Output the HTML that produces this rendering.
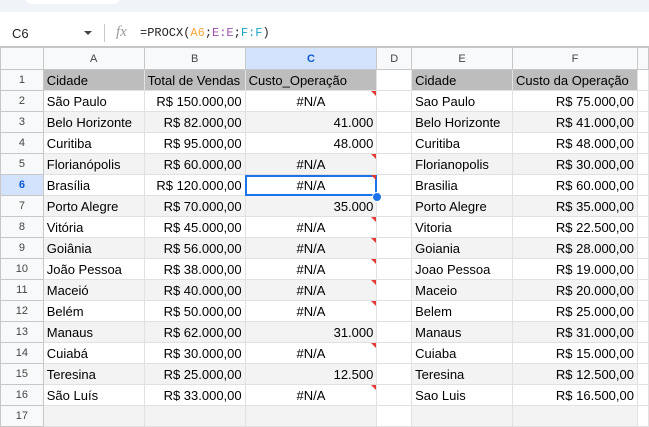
<!DOCTYPE html>
<html><head><meta charset="utf-8"><style>
body{margin:0;width:649px;height:411px;overflow:hidden;background:#fff;font-family:"Liberation Sans",Arial,sans-serif;position:relative}
.top{position:absolute;left:0;top:0;width:649px;height:12px;background:#f0f4f9}
.pill{position:absolute;left:25px;top:-10px;width:95px;height:14px;background:#fff;border-radius:10px}
.fbar{position:absolute;left:0;top:20px;width:649px;height:26px;border-bottom:1px solid #c7c7c7;font-size:13px}
.fbar .nm{position:absolute;left:12px;top:6px;color:#1f1f1f}
.fbar .dd{position:absolute;left:84px;top:11px;width:0;height:0;border-left:4px solid transparent;border-right:4px solid transparent;border-top:4px solid #444}
.fbar .sep{position:absolute;left:104px;top:4px;width:1px;height:18px;background:#c7c7c7}
.fbar .fx{position:absolute;left:116px;top:4px;color:#999;font-style:italic;font-family:"Liberation Serif",serif;font-size:15px}
.fbar .f{position:absolute;left:140px;top:6px;font-family:"Liberation Mono",monospace;font-size:12px;color:#1f1f1f}
table{position:absolute;left:0;top:47px;border-collapse:collapse;table-layout:fixed}
td{height:20px;padding:0 3px;border:1px solid #e1e1e1;font-size:13px;color:#000;white-space:nowrap;overflow:hidden;position:relative}
tr.h td{height:21px;background:#f8f9fa;color:#444;font-size:11px;text-align:center;border-color:#c7c7c7}
td.rh{background:#f8f9fa;color:#444;font-size:11px;text-align:center;border-color:#c7c7c7}
tr.h td.sel{background:#d3e3fd;color:#0b57d0;font-weight:bold}
td.rh.sel{background:#d3e3fd;color:#0b57d0;font-weight:bold}
tr.hd td.d{background:#bdbdbd}
tr.g td.d{background:#f3f3f3}
.r{text-align:right}.c{text-align:center}
.tri:after{content:"";position:absolute;right:0;top:0;border-top:5px solid #e53935;border-left:5px solid transparent}
.cur{outline:2px solid #1a73e8;outline-offset:-2px}
.dot{position:absolute;left:372px;top:192px;width:8px;height:8px;border-radius:50%;background:#1a73e8;border:1px solid #fff}
</style></head><body>
<div class="top"><div class="pill"></div></div>
<div class="fbar"><span class="nm">C6</span><span class="dd"></span><span class="sep"></span><span class="fx">fx</span><span class="f">=PROCX(<span style="color:#f4a53c">A6</span>;<span style="color:#9c4fb0">E:E</span>;<span style="color:#1aa3c8">F:F</span>)</span></div>
<table>
<colgroup><col style="width:43px"><col style="width:101px"><col style="width:101px"><col style="width:132px"><col style="width:35px"><col style="width:101px"><col style="width:125px"><col style="width:11px"></colgroup>
<tr class="h"><td class="rh"></td><td>A</td><td>B</td><td class="sel">C</td><td>D</td><td>E</td><td>F</td><td></td></tr>
<tr class="hd"><td class="rh">1</td><td class="d">Cidade</td><td class="d">Total de Vendas</td><td class="d">Custo_Operação</td><td></td><td class="d">Cidade</td><td class="d">Custo da Operação</td><td></td></tr>
<tr><td class="rh">2</td><td class="d">São Paulo</td><td class="d r">R$ 150.000,00</td><td class="d c tri">#N/A</td><td></td><td class="d">Sao Paulo</td><td class="d r">R$ 75.000,00</td><td></td></tr>
<tr class="g"><td class="rh">3</td><td class="d">Belo Horizonte</td><td class="d r">R$ 82.000,00</td><td class="d r">41.000</td><td></td><td class="d">Belo Horizonte</td><td class="d r">R$ 41.000,00</td><td></td></tr>
<tr><td class="rh">4</td><td class="d">Curitiba</td><td class="d r">R$ 95.000,00</td><td class="d r">48.000</td><td></td><td class="d">Curitiba</td><td class="d r">R$ 48.000,00</td><td></td></tr>
<tr class="g"><td class="rh">5</td><td class="d">Florianópolis</td><td class="d r">R$ 60.000,00</td><td class="d c tri">#N/A</td><td></td><td class="d">Florianopolis</td><td class="d r">R$ 30.000,00</td><td></td></tr>
<tr><td class="rh sel">6</td><td class="d">Brasília</td><td class="d r">R$ 120.000,00</td><td class="d c tri cur">#N/A</td><td></td><td class="d">Brasilia</td><td class="d r">R$ 60.000,00</td><td></td></tr>
<tr class="g"><td class="rh">7</td><td class="d">Porto Alegre</td><td class="d r">R$ 70.000,00</td><td class="d r">35.000</td><td></td><td class="d">Porto Alegre</td><td class="d r">R$ 35.000,00</td><td></td></tr>
<tr><td class="rh">8</td><td class="d">Vitória</td><td class="d r">R$ 45.000,00</td><td class="d c tri">#N/A</td><td></td><td class="d">Vitoria</td><td class="d r">R$ 22.500,00</td><td></td></tr>
<tr class="g"><td class="rh">9</td><td class="d">Goiânia</td><td class="d r">R$ 56.000,00</td><td class="d c tri">#N/A</td><td></td><td class="d">Goiania</td><td class="d r">R$ 28.000,00</td><td></td></tr>
<tr><td class="rh">10</td><td class="d">João Pessoa</td><td class="d r">R$ 38.000,00</td><td class="d c tri">#N/A</td><td></td><td class="d">Joao Pessoa</td><td class="d r">R$ 19.000,00</td><td></td></tr>
<tr class="g"><td class="rh">11</td><td class="d">Maceió</td><td class="d r">R$ 40.000,00</td><td class="d c tri">#N/A</td><td></td><td class="d">Maceio</td><td class="d r">R$ 20.000,00</td><td></td></tr>
<tr><td class="rh">12</td><td class="d">Belém</td><td class="d r">R$ 50.000,00</td><td class="d c tri">#N/A</td><td></td><td class="d">Belem</td><td class="d r">R$ 25.000,00</td><td></td></tr>
<tr class="g"><td class="rh">13</td><td class="d">Manaus</td><td class="d r">R$ 62.000,00</td><td class="d r">31.000</td><td></td><td class="d">Manaus</td><td class="d r">R$ 31.000,00</td><td></td></tr>
<tr><td class="rh">14</td><td class="d">Cuiabá</td><td class="d r">R$ 30.000,00</td><td class="d c tri">#N/A</td><td></td><td class="d">Cuiaba</td><td class="d r">R$ 15.000,00</td><td></td></tr>
<tr class="g"><td class="rh">15</td><td class="d">Teresina</td><td class="d r">R$ 25.000,00</td><td class="d r">12.500</td><td></td><td class="d">Teresina</td><td class="d r">R$ 12.500,00</td><td></td></tr>
<tr><td class="rh">16</td><td class="d">São Luís</td><td class="d r">R$ 33.000,00</td><td class="d c tri">#N/A</td><td></td><td class="d">Sao Luis</td><td class="d r">R$ 16.500,00</td><td></td></tr>
<tr class="g"><td class="rh">17</td><td class="d"></td><td class="d"></td><td class="d"></td><td></td><td class="d"></td><td class="d"></td><td></td></tr>
</table>
<div class="dot"></div>
</body></html>
